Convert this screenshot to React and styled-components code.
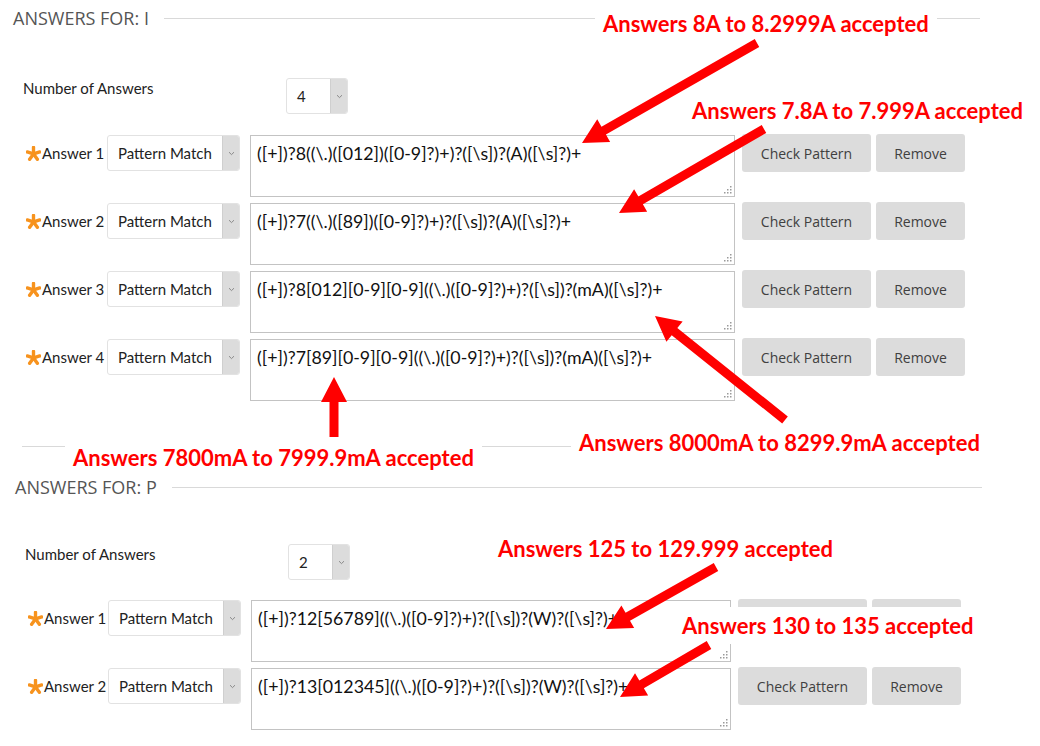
import React from "react";
import styled, { createGlobalStyle } from "styled-components";

const GlobalStyle = createGlobalStyle`
  body {
    margin: 0;
    background: #fff;
    font-family: Lato, "Open Sans", sans-serif;
    color: #222;
  }
`;

const Page = styled.div`
  position: relative;
  width: 1040px;
  height: 746px;
  overflow: hidden;
`;

const Section = styled.section`
  padding-left: ${(p) => p.$indent}px;
`;

// title with the long grey rule after it
const Header = styled.div`
  display: flex;
  align-items: center;
  gap: 15px;
  width: 967px;
  height: 36px;
  margin-left: -10px;
  font-family: "Open Sans", sans-serif;
  font-size: 18px;
  color: #555;
  &::after {
    content: "";
    flex: 1;
    height: 1px;
    background: #d9d9d9;
  }
`;

const NumberRow = styled.div`
  display: flex;
  align-items: flex-start;
  margin-top: ${(p) => p.$top}px;
  margin-bottom: ${(p) => p.$bottom}px;
`;

const NumberLabel = styled.div`
  width: 263px;
  font-size: 15px;
  line-height: 20px;
  color: #222;
`;

const Select = styled.div`
  display: flex;
  width: ${(p) => p.$width}px;
  height: 36px;
  box-sizing: border-box;
  border: 1px solid #e2e2e2;
  border-radius: 3px;
  overflow: hidden;
  background: #fff;
`;

const SelectValue = styled.div`
  flex: 1;
  display: flex;
  align-items: center;
  padding-left: 10px;
  font-size: 15px;
  color: #222;
`;

const SelectArrow = styled.div`
  width: 16px;
  display: flex;
  align-items: center;
  justify-content: center;
  background: #dcdcdc;
  border-left: 1px solid #cfcfcf;
`;

const AnswerList = styled.div`
  display: flex;
  flex-direction: column;
  gap: 6px;
`;

const AnswerRow = styled.div`
  display: flex;
  align-items: flex-start;
`;

const Lead = styled.div`
  width: ${(p) => p.$width}px;
  height: 36px;
  display: flex;
  align-items: center;
  padding-left: 3px;
  box-sizing: border-box;
  font-size: 15px;
  color: #222;
`;

const PatternBox = styled.div`
  position: relative;
  width: ${(p) => p.$width}px;
  height: 62px;
  margin-left: 10px;
  box-sizing: border-box;
  border: 1px solid #c3c3c3;
  padding: 5px 6px;
  font-family: Lato, sans-serif;
  font-size: 17.8px;
  line-height: 24px;
  color: #111;
  white-space: nowrap;
`;

const Grip = styled.svg`
  position: absolute;
  right: 2px;
  bottom: 2px;
`;

const Buttons = styled.div`
  display: flex;
  gap: 5px;
  margin-left: 7px;
  margin-top: -1px;
`;

const Button = styled.button`
  width: ${(p) => p.$width}px;
  height: 38px;
  border: none;
  border-radius: 3px;
  background: #dcdcdc;
  color: #404040;
  font-family: "Open Sans", sans-serif;
  font-size: 14px;
  padding: 0;
`;

const Divider = styled.div`
  width: 963px;
  height: 1px;
  margin: 45px 0 22px 22px;
  background: #d9d9d9;
`;

const Overlay = styled.div`
  position: absolute;
  inset: 0;
  pointer-events: none;
`;

const Note = styled.div`
  position: absolute;
  left: ${(p) => p.$x}px;
  top: ${(p) => p.$y}px;
  padding: 6px 8px;
  background: #fff;
  font-family: Lato, sans-serif;
  font-weight: 700;
  font-size: 22px;
  line-height: 25px;
  color: #ff0000;
  white-space: nowrap;
`;

const ArrowLayer = styled.svg`
  position: absolute;
  left: 0;
  top: 0;
`;

const Star = () => (
  <svg width="15" height="15" viewBox="0 0 16 16" style={{ marginRight: 1 }}>
    {[0, 72, 144, 216, 288].map((a) => (
      <line key={a} x1="8" y1="8.5" x2="8" y2="1.5" stroke="#f7931e" strokeWidth="3.6"
        strokeLinecap="round" transform={`rotate(${a} 8 8.5)`} />
    ))}
  </svg>
);

const Chevron = () => (
  <svg width="7" height="5" viewBox="0 0 7 5">
    <path d="M1 1.2 L3.5 3.6 L6 1.2" fill="none" stroke="#888" strokeWidth="1" />
  </svg>
);

const ResizeGrip = () => (
  <Grip width="9" height="9" viewBox="0 0 9 9">
    {[[7, 1], [4, 4], [7, 4], [1, 7], [4, 7], [7, 7]].map(([x, y]) => (
      <rect key={`${x}-${y}`} x={x} y={y} width="1.5" height="1.5" fill="#9a9a9a" />
    ))}
  </Grip>
);

const Dropdown = ({ value, width }) => (
  <Select $width={width}>
    <SelectValue>{value}</SelectValue>
    <SelectArrow>
      <Chevron />
    </SelectArrow>
  </Select>
);

const AnswerSection = ({ title, indent, count, answers, numTop, numBottom, leadWidth, boxWidth }) => (
  <Section $indent={indent}>
    <Header>{title}</Header>
    <NumberRow $top={numTop} $bottom={numBottom}>
      <NumberLabel>Number of Answers</NumberLabel>
      <Dropdown value={count} width={62} />
    </NumberRow>
    <AnswerList>
      {answers.map((pattern, i) => (
        <AnswerRow key={i}>
          <Lead $width={leadWidth}>
            <Star />
            Answer {i + 1}
          </Lead>
          <Dropdown value="Pattern Match" width={133} />
          <PatternBox $width={boxWidth}>
            {pattern}
            <ResizeGrip />
          </PatternBox>
          <Buttons>
            <Button $width={129}>Check Pattern</Button>
            <Button $width={89}>Remove</Button>
          </Buttons>
        </AnswerRow>
      ))}
    </AnswerList>
  </Section>
);

const arrowPoints = ([x1, y1], [x2, y2], w = 9, hl = 25, hw = 13) => {
  const len = Math.hypot(x2 - x1, y2 - y1);
  const ux = (x2 - x1) / len;
  const uy = (y2 - y1) / len;
  const px = -uy;
  const py = ux;
  const bx = x2 - ux * hl;
  const by = y2 - uy * hl;
  const pts = [
    [x1 + (px * w) / 2, y1 + (py * w) / 2],
    [bx + (px * w) / 2, by + (py * w) / 2],
    [bx + px * hw, by + py * hw],
    [x2, y2],
    [bx - px * hw, by - py * hw],
    [bx - (px * w) / 2, by - (py * w) / 2],
    [x1 - (px * w) / 2, y1 - (py * w) / 2],
  ];
  return pts.map((p) => p.join(",")).join(" ");
};

const arrows = [
  [[757, 43], [582, 143]],
  [[764, 129], [619, 213]],
  [[785, 420], [655, 316]],
  [[334, 437], [334, 377]],
  [[716, 567], [606, 629]],
  [[709, 645], [620, 697]],
];

const notes = [
  { x: 595, y: 5, text: "Answers 8A to 8.2999A accepted" },
  { x: 684, y: 92, text: "Answers 7.8A to 7.999A accepted" },
  { x: 571, y: 424, text: "Answers 8000mA to 8299.9mA accepted" },
  { x: 65, y: 439, text: "Answers 7800mA to 7999.9mA accepted" },
  { x: 490, y: 530, text: "Answers 125 to 129.999 accepted" },
  { x: 674, y: 607, text: "Answers 130 to 135 accepted" },
];

const App = () => {
  return (
    <Page>
      <GlobalStyle />
      <AnswerSection
        title="ANSWERS FOR: I"
        indent={23}
        count="4"
        numTop={42}
        numBottom={21}
        leadWidth={84}
        boxWidth={485}
        answers={[
          "([+])?8((\\.)([012])([0-9]?)+)?([\\s])?(A)([\\s]?)+",
          "([+])?7((\\.)([89])([0-9]?)+)?([\\s])?(A)([\\s]?)+",
          "([+])?8[012][0-9][0-9]((\\.)([0-9]?)+)?([\\s])?(mA)([\\s]?)+",
          "([+])?7[89][0-9][0-9]((\\.)([0-9]?)+)?([\\s])?(mA)([\\s]?)+",
        ]}
      />
      <Divider />
      <AnswerSection
        title="ANSWERS FOR: P"
        indent={25}
        count="2"
        numTop={39}
        numBottom={20}
        leadWidth={83}
        boxWidth={480}
        answers={[
          "([+])?12[56789]((\\.)([0-9]?)+)?([\\s])?(W)?([\\s]?)+",
          "([+])?13[012345]((\\.)([0-9]?)+)?([\\s])?(W)?([\\s]?)+",
        ]}
      />
      <Overlay>
        {notes.map((n) => (
          <Note key={n.text} $x={n.x} $y={n.y}>
            {n.text}
          </Note>
        ))}
        <ArrowLayer width="1040" height="746">
          {arrows.map(([from, to], i) => (
            <polygon key={i} points={arrowPoints(from, to)} fill="#ff0000" />
          ))}
        </ArrowLayer>
      </Overlay>
    </Page>
  );
};

export default App;
